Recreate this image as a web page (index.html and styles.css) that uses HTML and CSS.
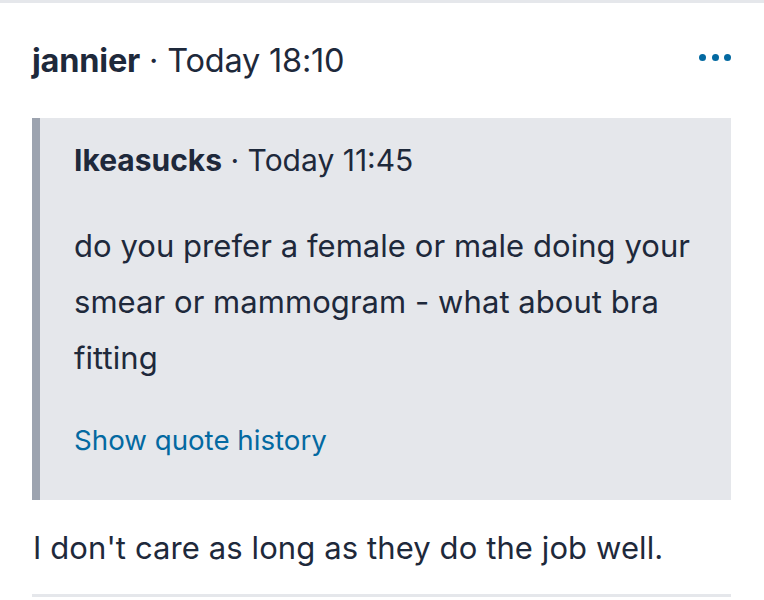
FILE: index.html
```html
<!DOCTYPE html>
<html>
<head>
<meta charset="utf-8">
<link rel="stylesheet" href="styles.css">
</head>
<body>
<div class="topline"></div>
<article class="post">
  <header class="post-header">
    <div class="meta"><span class="author">jannier</span><span class="sep"> · </span><span class="time">Today 18:10</span></div>
    <div class="more" aria-label="More"><span></span><span></span><span></span></div>
  </header>
  <blockquote class="quote">
    <div class="quote-meta"><span class="author">Ikeasucks</span><span class="sep"> · </span><span class="time">Today 11:45</span></div>
    <p class="quote-text">do you prefer a female or male doing your smear or mammogram - what about bra fitting</p>
    <a class="quote-history">Show quote history</a>
  </blockquote>
  <p class="reply">I don't care as long as they do the job well.</p>
  <div class="divider"></div>
</article>
</body>
</html>
```
FILE: styles.css
```css
html, body {
  margin: 0;
  padding: 0;
  background: #ffffff;
}
body {
  font-family: Inter, "Noto Sans", sans-serif;
  color: #1e293b;
}
.topline {
  height: 3px;
  background: #e5e7eb;
}
.post {
  padding: 0 33px 0 32px;
}
.post-header {
  display: flex;
  align-items: center;
  justify-content: space-between;
  height: 115px;
}
.meta {
  font-size: 32.5px;
  letter-spacing: -0.2px;
}
.meta .author, .quote-meta .author {
  font-weight: 700;
}
.more {
  display: flex;
  gap: 5.5px;
  margin-bottom: 7px;
}
.more span {
  width: 7px;
  height: 7px;
  border-radius: 50%;
  background: #0369a1;
}
.quote {
  margin: 0;
  background: #e5e7eb;
  border-left: 8px solid #9ca3af;
  padding: 26px 34px 40px 34px;
  height: 382px;
  box-sizing: border-box;
}
.quote-meta {
  font-size: 30px;
  line-height: 32px;
  letter-spacing: 0;
}
.quote-text {
  margin: 42px 0 0 0;
  font-size: 31px;
  line-height: 56px;
  letter-spacing: 0.05px;
}
.quote-history {
  display: block;
  margin-top: 34px;
  color: #0369a1;
  font-size: 27.7px;
  line-height: 40px;
}
.reply {
  margin: 28px 0 0 1px;
  font-size: 31px;
  line-height: 40px;
  letter-spacing: 0.1px;
}
.divider {
  margin-top: 26px;
  height: 3px;
  background: #e5e7eb;
}
```
